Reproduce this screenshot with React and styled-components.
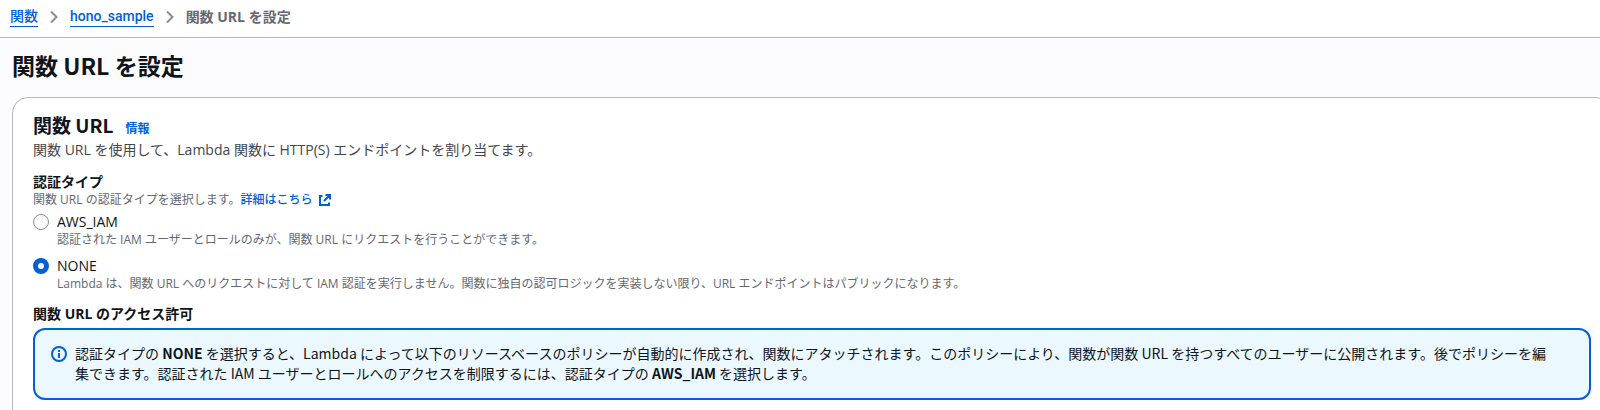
import { Fragment, useState } from "react";
import styled, { createGlobalStyle } from "styled-components";

const GlobalStyle = createGlobalStyle`
  * {
    box-sizing: border-box;
  }

  body {
    margin: 0;
    background-color: #fcfcfe;
    color: #0f141a;
    font-family: "Open Sans", "Noto Sans CJK JP", sans-serif;
    font-size: 14px;
    line-height: 20px;
  }
`;

const Page = styled.div`
  display: flex;
  flex-direction: column;
  min-height: 100vh;
  overflow: hidden;
`;

const Breadcrumbs = styled.nav`
  padding: 7px 10px 10px;
  background-color: white;
  border-bottom: 1px solid #b6b6c0;
`;

const CrumbList = styled.ol`
  display: flex;
  align-items: center;
  gap: 12px;
  margin: 0;
  padding: 0;
  list-style: none;
`;

const Crumb = styled.li`
  display: flex;
  color: ${(props) => (props.$current ? "#656871" : "inherit")};
  font-weight: ${(props) => (props.$current ? 700 : 400)};
`;

const Link = styled.a`
  color: #0060d8;
  font-weight: ${(props) => (props.$bold ? 700 : 500)};
  text-decoration: none;
`;

const CrumbLink = styled(Link)`
  border-bottom: 1px solid #0060d8;
  font-family: Roboto, "Noto Sans CJK JP", sans-serif;
  line-height: 19px;
`;

const Main = styled.main`
  display: flex;
  flex: 1;
  flex-direction: column;
  padding: 12px 0 0 12px;
`;

const PageTitle = styled.h1`
  margin: 0 0 17px;
  font-family: "Noto Sans CJK JP", sans-serif;
  font-size: 23px;
  line-height: 30px;
`;

const Panel = styled.section`
  flex: 1;
  margin: 0 -12px -20px 0;
  padding: 15px 20px 30px;
  background-color: white;
  border: 1px solid #b6b6c0;
  border-radius: 16px;
`;

const PanelHeader = styled.header`
  display: flex;
  align-items: baseline;
  gap: 12px;
  margin-bottom: 3px;
`;

const PanelTitle = styled.h2`
  margin: 0;
  font-family: "Noto Sans CJK JP", sans-serif;
  font-size: 19px;
  line-height: 24px;
`;

const InfoLink = styled(Link)`
  font-size: 12px;
  line-height: 16px;
`;

const Description = styled.p`
  margin: 0 0 12px;
  color: #424650;
`;

const Field = styled.fieldset`
  margin: 0 0 12px;
  padding: 0;
  border: 0;
`;

const Label = styled.legend`
  padding: 0;
  font-weight: 700;
`;

const Hint = styled.p`
  margin: 0;
  color: #656871;
  font-size: 12px;
  line-height: 16px;
`;

const ExternalIcon = styled.svg`
  margin-left: 6px;
  vertical-align: -3px;
`;

const Options = styled.div`
  display: grid;
  gap: 8px;
  padding-top: 4px;
`;

const Option = styled.div`
  display: grid;
  grid-template-columns: 16px 1fr;
  column-gap: 8px;
  align-items: center;

  ${Hint} {
    grid-column: 2;
  }
`;

const Radio = styled.input`
  width: 16px;
  height: 16px;
  margin: 0;
  appearance: none;
  background-color: white;
  border: 1px solid #8c8c94;
  border-radius: 50%;

  &:checked {
    border: 5px solid #0060d8;
  }
`;

const SectionTitle = styled.h3`
  margin: 0 0 4px;
  font-size: 14px;
`;

const Alert = styled.div`
  display: flex;
  gap: 8px;
  padding: 13px 36px 15px 16px;
  background-color: #ebf8ff;
  border: 2px solid #0060d8;
  border-radius: 12px;
  font-family: "Noto Sans CJK JP", sans-serif;

  svg {
    flex: none;
    margin-top: 3px;
  }

  p {
    margin: 0;
  }
`;

function Chevron() {
  return (
    <svg width="8" height="12" viewBox="0 0 8 12" fill="none" aria-hidden="true">
      <path d="M1 .5L6.500 6 1 11.500" stroke="#8c8c94" strokeWidth="2" />
    </svg>
  );
}

function External() {
  return (
    <ExternalIcon width="14" height="14" viewBox="0 0 14 14" fill="none" aria-hidden="true">
      <path
        d="M7.500 2H12v4.500M12 2L6 8M4.500 3H2v9h9V9.500"
        stroke="#0060d8"
        strokeWidth="2"
      />
    </ExternalIcon>
  );
}

function InfoIcon() {
  return (
    <svg width="16" height="16" viewBox="0 0 16 16" fill="none" aria-hidden="true">
      <circle cx="8" cy="8" r="7" stroke="#0060d8" strokeWidth="2" />
      <path d="M8 7v5M8 4v2" stroke="#0060d8" strokeWidth="2" />
    </svg>
  );
}

const crumbs = ["関数", "hono_sample"];

const authTypes = [
  {
    value: "AWS_IAM",
    hint: "認証された IAM ユーザーとロールのみが、関数 URL にリクエストを行うことができます。",
  },
  {
    value: "NONE",
    hint: "Lambda は、関数 URL へのリクエストに対して IAM 認証を実行しません。関数に独自の認可ロジックを実装しない限り、URL エンドポイントはパブリックになります。",
  },
];

function App() {
  const [authType, setAuthType] = useState("NONE");

  return (
    <Page lang="ja">
      <GlobalStyle />
      <Breadcrumbs>
        <CrumbList>
          {crumbs.map((name) => (
            <Fragment key={name}>
              <Crumb>
                <CrumbLink href="#">{name}</CrumbLink>
              </Crumb>
              <Chevron />
            </Fragment>
          ))}
          <Crumb $current>関数 URL を設定</Crumb>
        </CrumbList>
      </Breadcrumbs>

      <Main>
        <PageTitle>関数 URL を設定</PageTitle>
        <Panel>
          <PanelHeader>
            <PanelTitle>関数 URL</PanelTitle>
            <InfoLink href="#" $bold>
              情報
            </InfoLink>
          </PanelHeader>
          <Description>
            関数 URL を使用して、Lambda 関数に HTTP(S) エンドポイントを割り当てます。
          </Description>

          <Field>
            <Label>認証タイプ</Label>
            <Hint>
              関数 URL の認証タイプを選択します。
              <Link href="#">
                詳細はこちら
                <External />
              </Link>
            </Hint>
            <Options>
              {authTypes.map(({ value, hint }) => (
                <Option key={value}>
                  <Radio
                    type="radio"
                    name="authType"
                    id={value}
                    checked={authType === value}
                    onChange={() => setAuthType(value)}
                  />
                  <label htmlFor={value}>{value}</label>
                  <Hint>{hint}</Hint>
                </Option>
              ))}
            </Options>
          </Field>

          <SectionTitle>関数 URL のアクセス許可</SectionTitle>
          <Alert>
            <InfoIcon />
            <p>
              認証タイプの <b>NONE</b>{" "}
              を選択すると、Lambda によって以下のリソースベースのポリシーが自動的に作成され、関数にアタッチされます。このポリシーにより、関数が関数 URL を持つすべてのユーザーに公開されます。後でポリシーを編集できます。認証された IAM ユーザーとロールへのアクセスを制限するには、認証タイプの{" "}
              <b>AWS_IAM</b> を選択します。
            </p>
          </Alert>
        </Panel>
      </Main>
    </Page>
  );
}

export default App;
